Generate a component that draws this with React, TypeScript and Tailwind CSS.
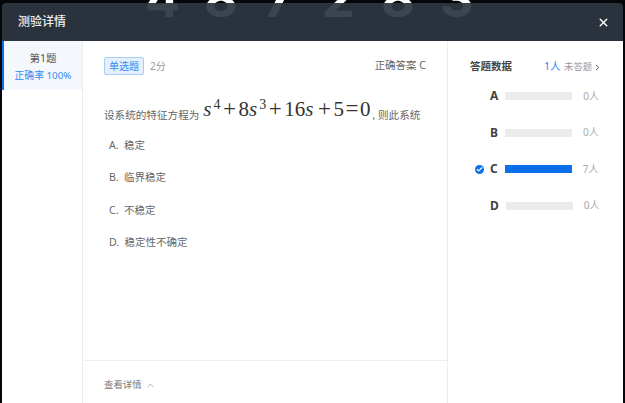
import React from "react";
import { ChevronRight, ChevronUp, X, Check } from "lucide-react";

const cjk = "font-['Noto_Sans','Noto_Sans_CJK_SC',sans-serif]";

const options = ["稳定", "临界稳定", "不稳定", "稳定性不确定"];

const answers = [
  { key: "A", count: "0人", correct: false },
  { key: "B", count: "0人", correct: false },
  { key: "C", count: "7人", correct: true },
  { key: "D", count: "0人", correct: false },
];

function Op({ children, w }: { children: string; w: string }) {
  return <span className={`inline-block text-center text-[23px] leading-none ${w}`}>{children}</span>;
}

function Formula() {
  return (
    <span className="relative top-[-3px] ml-[4px] font-['Liberation_Serif',serif] text-[21px] leading-[30px] text-[#333]">
      <i className="mr-[2px]">s</i>
      <sup className="relative top-[-1px] align-[6px] text-[14px] leading-none">4</sup>
      <Op w="w-[18px]">+</Op>8<i className="mr-[2px]">s</i>
      <sup className="relative top-[-1px] align-[6px] text-[14px] leading-none">3</sup>
      <Op w="w-[18px]">+</Op>16<i className="mr-[2px]">s</i>
      <Op w="w-[18px]">+</Op>5<Op w="w-[16px]">=</Op>0
    </span>
  );
}

export default function App() {
  return (
    <div className={`relative h-[403px] w-[625px] overflow-hidden bg-[#050607] ${cjk}`}>
      {/* page behind the dialog, only the digits peek out */}
      <div className="absolute left-[145px] top-[-27px] flex w-[360px] font-['Inter',sans-serif] text-[52px] font-bold leading-[52px] text-white">
        {["4", "8", "7", "2", "8", "3"].map((d, i) => (
          <span key={i} className="w-[59px]">
            {d}
          </span>
        ))}
      </div>

      <div className="relative ml-[2px] mt-[3px] flex h-[400px] w-[621px] flex-col overflow-hidden rounded-t-[4px]">
        <div className="flex h-[38px] shrink-0 items-center justify-between bg-[#2c3642]/[0.93] pl-[16px] pr-[13px]">
          <span className="text-[12px] font-medium text-[#f0f0f0]">测验详情</span>
          <X className="h-[13px] w-[13px] text-white" strokeWidth={2.6} />
        </div>

        <div className="flex min-h-0 flex-1 bg-white">
          <div className="w-[81px] shrink-0 border-r border-[#ebedf0]">
            <div className="flex h-[49px] flex-col items-center justify-center border-l-2 border-[#0a6fe8] bg-[#f4f8fd] pt-[2px]">
              <span className="text-[10.5px] leading-[17px] text-[#555]">第1题</span>
              <span className="text-[9.8px] leading-[17px] text-[#2f8af0]">正确率 100%</span>
            </div>
          </div>

          <div className="flex w-[365px] shrink-0 flex-col border-r border-[#ebedf0]">
            <div className="flex-1 pl-[21px] pr-[21px] pt-[16px]">
              <div className="flex items-center justify-between">
                <div className="flex items-center gap-[6px]">
                  <span className="flex h-[18px] w-[40px] items-center justify-center rounded-[2px] border border-[#a9cdf7] bg-[#e5f0fd] text-[10px] text-[#2f8af0]">
                    单选题
                  </span>
                  <span className="text-[10px] text-[#999]">2分</span>
                </div>
                <span className="text-[10.5px] text-[#666]">正确答案 C</span>
              </div>

              <div className="mt-[22px] h-[30px] whitespace-nowrap text-[10.6px] leading-[30px] text-[#666]">
                设系统的特征方程为
                <Formula />
                <span className="ml-[2px]">, 则此系统</span>
              </div>

              <ul className="mt-[9px] flex flex-col gap-[14.3px] pl-[5px]">
                {options.map((text, i) => (
                  <li key={text} className="h-[18px] text-[10.5px] leading-[18px] text-[#666]">
                    {"ABCD"[i]}. &nbsp;{text}
                  </li>
                ))}
              </ul>
            </div>

            <div className="flex h-[43px] shrink-0 items-center gap-[3px] border-t border-[#eeeff1] pl-[21px] pt-[7px] text-[9.4px] text-[#777]">
              查看详情
              <ChevronUp className="h-[11px] w-[11px] text-[#888]" strokeWidth={1.5} />
            </div>
          </div>

          <div className="flex-1 pl-[22px] pt-[17px]">
            <div className="flex h-[18px] items-center">
              <span className="w-[74px] text-[10.5px] font-bold text-[#444]">答题数据</span>
              <span className="w-[20px] text-[10.5px] text-[#2f8af0]">1人</span>
              <span className="text-[9.4px] text-[#999]">未答题</span>
              <ChevronRight className="ml-[1px] h-[9px] w-[9px] text-[#444]" strokeWidth={2.4} />
            </div>

            <div className="mt-[11px] flex flex-col gap-[18.5px] pl-[20px]">
              {answers.map((a) => (
                <div key={a.key} className="relative flex h-[18px] items-center">
                  {a.correct && (
                    <span className="absolute left-[-15px] flex h-[9px] w-[9px] items-center justify-center rounded-full bg-[#0a6fe8]">
                      <Check className="h-[7px] w-[7px] text-white" strokeWidth={4} />
                    </span>
                  )}
                  <span className="mr-[7px] text-[12px] font-bold text-[#444]">{a.key}</span>
                  <span className={`h-[8px] w-[67px] ${a.correct ? "bg-[#0a6fe8]" : "bg-[#ebebeb]"}`} />
                  <span className="ml-[11px] text-[10px] text-[#aaa]">{a.count}</span>
                </div>
              ))}
            </div>
          </div>
        </div>
      </div>
    </div>
  );
}
